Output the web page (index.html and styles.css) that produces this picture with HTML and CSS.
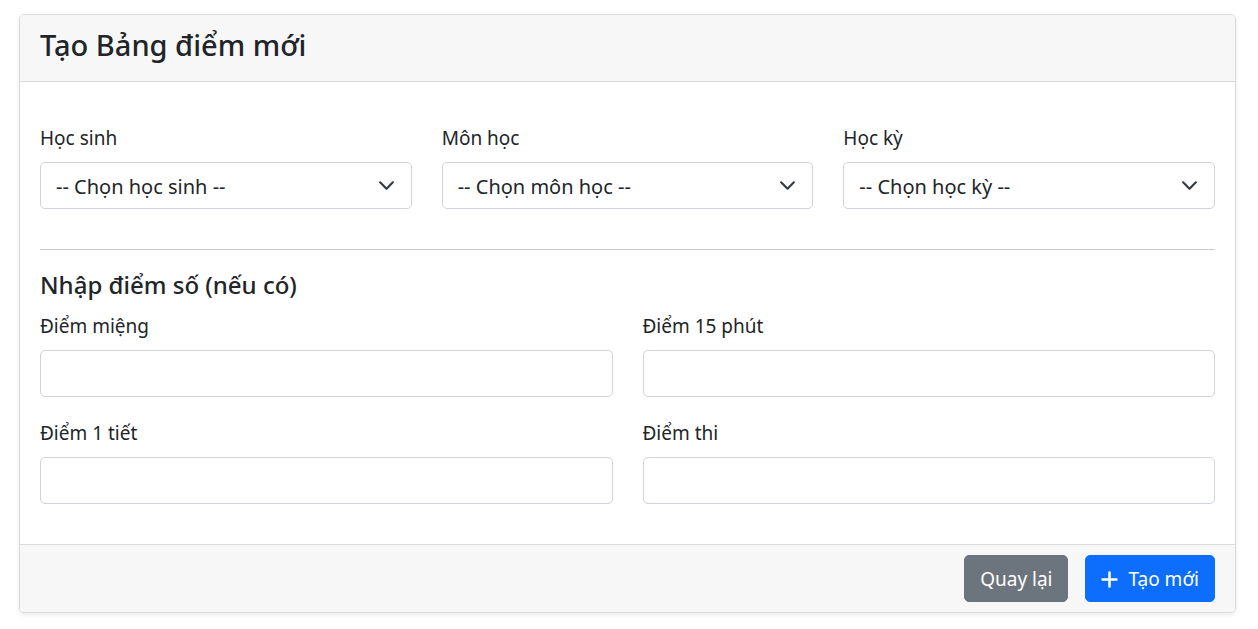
FILE: index.html
```html
<!DOCTYPE html>
<html lang="vi">
<head>
<meta charset="utf-8">
<title>Tạo Bảng điểm mới</title>
<link rel="stylesheet" href="styles.css">
</head>
<body>
<div class="page">
  <div class="card">
    <div class="card-header">
      <h4 class="card-title">Tạo Bảng điểm mới</h4>
    </div>
    <div class="card-body">
      <div class="grid grid-3 top-row">
        <div class="field">
          <label class="form-label">Học sinh</label>
          <div class="form-select"><span>-- Chọn học sinh --</span><svg class="chev" viewBox="0 0 16 16"><path d="m2 5 6 6 6-6"/></svg></div>
        </div>
        <div class="field">
          <label class="form-label">Môn học</label>
          <div class="form-select"><span>-- Chọn môn học --</span><svg class="chev" viewBox="0 0 16 16"><path d="m2 5 6 6 6-6"/></svg></div>
        </div>
        <div class="field">
          <label class="form-label">Học kỳ</label>
          <div class="form-select"><span>-- Chọn học kỳ --</span><svg class="chev" viewBox="0 0 16 16"><path d="m2 5 6 6 6-6"/></svg></div>
        </div>
      </div>
      <hr class="divider">
      <h5 class="section-title">Nhập điểm số (nếu có)</h5>
      <div class="grid grid-2">
        <div class="field">
          <label class="form-label">Điểm miệng</label>
          <div class="form-control"></div>
        </div>
        <div class="field">
          <label class="form-label">Điểm 15 phút</label>
          <div class="form-control"></div>
        </div>
        <div class="field">
          <label class="form-label">Điểm 1 tiết</label>
          <div class="form-control"></div>
        </div>
        <div class="field">
          <label class="form-label">Điểm thi</label>
          <div class="form-control"></div>
        </div>
      </div>
    </div>
    <div class="card-footer">
      <button class="btn btn-secondary">Quay lại</button>
      <button class="btn btn-primary"><svg class="plus" viewBox="0 0 16 16"><path d="M8 1.5v13M1.5 8h13"/></svg>Tạo mới</button>
    </div>
  </div>
</div>
</body>
</html>
```

FILE: styles.css
```css
* { box-sizing: border-box; }
html, body { margin: 0; padding: 0; background: #fff; }
body {
  font-family: "Noto Sans", "Open Sans", sans-serif;
  font-size: 20px;
  line-height: 30px;
  color: #212529;
}
.page { padding: 14px 22px 16px 19px; }
.card {
  border: 1px solid #dadada;
  border-radius: 5px;
  background: #fff;
  box-shadow: 0 2px 5px rgba(0, 0, 0, 0.08);
  overflow: hidden;
}
.card-header {
  background: #f7f7f7;
  border-bottom: 1px solid #dadada;
  padding: 12px 20px 18px;
}
.card-title {
  margin: 0;
  font-size: 29px;
  line-height: 36px;
  font-weight: 500;
}
.card-body { padding: 20px; }
.grid { display: grid; column-gap: 30px; }
.grid-3 { grid-template-columns: repeat(3, 1fr); }
.grid-2 { grid-template-columns: repeat(2, 1fr); }
.top-row { margin-top: 20px; }
.field { margin-bottom: 20px; }
.form-label { display: block; padding-top: 1px; margin-bottom: 9px; font-size: 19px; }
.form-select, .form-control {
  height: 47px;
  border: 1px solid #ced4da;
  border-radius: 5px;
  background: #fff;
}
.form-select {
  display: flex;
  align-items: center;
  justify-content: space-between;
  padding: 0 16px 0 15px;
}
.form-select span { padding-top: 2px; }
.chev { width: 17px; height: 17px; }
.chev path { fill: none; stroke: #343a40; stroke-width: 2; stroke-linecap: round; stroke-linejoin: round; }
.divider {
  margin: 20px 0;
  border: 0;
  border-top: 1px solid #c8c9ca;
}
.section-title {
  margin: 0 0 10px;
  font-size: 24px;
  line-height: 30px;
  font-weight: 500;
}
.card-footer {
  background: #f7f7f7;
  border-top: 1px solid #dadada;
  padding: 10px 20px;
  display: flex;
  justify-content: flex-end;
  gap: 17px;
}
.btn {
  font-family: inherit;
  font-size: 19px;
  line-height: 30px;
  padding: 8px 15px 7px;
  border: 1px solid transparent;
  border-radius: 5px;
  color: #fff;
  display: inline-flex;
  align-items: center;
}
.btn-secondary { background: #6c757d; border-color: #6c757d; }
.btn-primary { background: #0d6efd; border-color: #0d6efd; }
.plus { width: 17px; height: 17px; margin-right: 10px; }
.plus path { fill: none; stroke: #fff; stroke-width: 2.4; stroke-linecap: round; }
```
